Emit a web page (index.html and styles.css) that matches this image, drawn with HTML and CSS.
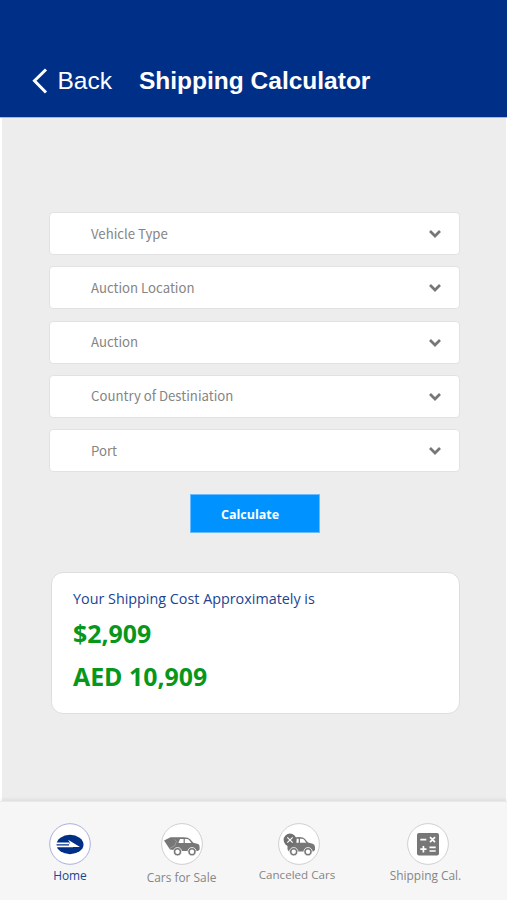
FILE: index.html
```html
<!DOCTYPE html>
<html lang="en">
<head>
<meta charset="utf-8">
<title>Shipping Calculator</title>
<link rel="stylesheet" href="styles.css">
</head>
<body>
<header class="header">
  <a class="back"><svg width="16" height="26" viewBox="0 0 16 26"><path d="M14 1.5 2.5 12.8 14 24.5" fill="none" stroke="#fff" stroke-width="3"/></svg><span>Back</span></a>
  <h1 class="title">Shipping Calculator</h1>
</header>
<main class="main">
  <form class="form">
    <div class="field"><span>Vehicle Type</span><svg class="chevron" viewBox="0 0 14 10"><path d="M2 2l5 5 5-5"/></svg></div>
    <div class="field"><span>Auction Location</span><svg class="chevron" viewBox="0 0 14 10"><path d="M2 2l5 5 5-5"/></svg></div>
    <div class="field"><span>Auction</span><svg class="chevron" viewBox="0 0 14 10"><path d="M2 2l5 5 5-5"/></svg></div>
    <div class="field"><span>Country of Destiniation</span><svg class="chevron" viewBox="0 0 14 10"><path d="M2 2l5 5 5-5"/></svg></div>
    <div class="field"><span>Port</span><svg class="chevron" viewBox="0 0 14 10"><path d="M2 2l5 5 5-5"/></svg></div>
  </form>
  <button class="calculate">Calculate</button>
  <section class="result">
    <p class="caption">Your Shipping Cost Approximately is</p>
    <p class="amount usd">$2,909</p>
    <p class="amount aed">AED 10,909</p>
  </section>
</main>
<nav class="nav">
  <a class="item home">
    <svg class="icon" viewBox="0 0 42 42"><circle cx="21" cy="21" r="20.3" fill="#fff" stroke="#a9b0dc"/><ellipse cx="21" cy="21.5" rx="13.5" ry="9.7" fill="#002f87"/><path d="M7 20.4h13.5M7 23.3h17" fill="none" stroke="#fff" stroke-width="1.7"/><path d="M19 16.8l12 7.3H20V21l1.2-.8z" fill="#fff"/></svg>
    <span>Home</span>
  </a>
  <a class="item sale">
    <svg class="icon" viewBox="0 0 42 42"><circle cx="21" cy="21" r="20.4" fill="#fff" stroke="#d0d0d0"/><path d="M3 17.5 9.5 14.2h11.5q6-.4 8.2 2.1l3.1 3.4 4.8 1.2q1.5.7 1.5 3v2.6l-1.7 1.5H19L9 26.6z" fill="#777"/><path d="M19 15.9h3.6v4.1h-5.2zm4.8 0h1.9q1.7 0 2.6 1.4l2.1 2.7h-6.6z" fill="#fff"/><path d="M9 25.2l4.5-2.3 2-4.5-1.8-2" fill="none" stroke="#b5b5b5" stroke-width=".6"/><g fill="#777" stroke="#fff" stroke-width=".8"><circle cx="16.5" cy="28.7" r="4.2"/><circle cx="31" cy="28.7" r="4.2"/></g><g fill="#fff"><circle cx="16.5" cy="28.7" r="2.2"/><circle cx="31" cy="28.7" r="2.2"/></g></svg>
    <span>Cars for Sale</span>
  </a>
  <a class="item canceled">
    <svg class="icon" viewBox="0 0 42 42"><circle cx="21" cy="21" r="20.4" fill="#fff" stroke="#d0d0d0"/><path d="M9.5 21l6.5-6q2-1 5-1 4.5 0 6 2l3 3.6 4.7 1.1q2.3.8 2.3 3.5v2.8l-1.7 1.5H11l-1.5-2z" fill="#777"/><path d="M18.4 15.7h2.3v4h-2.3zm3.6 0h1.8q1.6 0 2.5 1.3l2 2.7H22z" fill="#fff"/><g fill="#777" stroke="#fff" stroke-width=".8"><circle cx="15.7" cy="28.7" r="4.2"/><circle cx="30" cy="28.7" r="4.2"/></g><g fill="#fff"><circle cx="15.7" cy="28.7" r="2.2"/><circle cx="30" cy="28.7" r="2.2"/></g><circle cx="12" cy="17" r="6.4" fill="#707070"/><path d="M9.3 14.3l5.4 5.4m0-5.4-5.4 5.4" stroke="#fff" stroke-width="1.2"/></svg>
    <span>Canceled Cars</span>
  </a>
  <a class="item calc">
    <svg class="icon" viewBox="0 0 42 42"><circle cx="21" cy="21" r="20.4" fill="#fff" stroke="#d0d0d0"/><rect x="10" y="10" width="22" height="22.5" rx="2" fill="#777"/><path d="M13.3 16.7h6M23 14.2l5 5m0-5-5 5M13.3 26.2h6.2m-3.1-3.2v6.4M22.5 24.4h6.2m-6.2 3.6h6.2" fill="none" stroke="#fff" stroke-width="1.7"/></svg>
    <span>Shipping Cal.</span>
  </a>
</nav>
</body>
</html>
```

FILE: styles.css
```css
* { box-sizing: border-box; }
body {
  margin: 0;
  width: 507px;
  height: 900px;
  display: flex;
  flex-direction: column;
  overflow: hidden;
  background: #fff;
  font-family: "Open Sans", sans-serif;
}
h1, p { margin: 0; }
.header {
  height: 118px;
  padding: 61px 0 0 32px;
  display: flex;
  align-items: flex-start;
  background: #002f87;
  border-bottom: 1px solid #aab4de;
  color: #fff;
  font-family: "Liberation Sans", sans-serif;
  line-height: 38px;
}
.back { width: 107px; display: flex; gap: 9.5px; align-items: center; font-size: 24.5px; }
.back span, .title { padding-top: 1px; }
.back svg { margin-top: 1px; }
.title { font-size: 24.5px; font-weight: 700; white-space: nowrap; }
.main {
  height: 683px;
  margin: 0 1px 0 2px;
  padding: 94px 46px 0 47px;
  background: #ededed;
}
.form { display: flex; flex-direction: column; gap: 11.3px; }
.field {
  height: 43px;
  border: 1px solid #e2e2e2;
  border-radius: 4px;
  background: #fff;
  display: flex;
  align-items: center;
  justify-content: space-between;
  padding: 0 17px 0 41px;
  color: #858585;
  font: 13.2px/20px "Noto Sans CJK SC", sans-serif;
}
.chevron { width: 14px; height: 10px; margin-top: 1px; fill: none; stroke: #777; stroke-width: 2.7; }
.calculate {
  display: block;
  width: 130px;
  height: 39px;
  margin: 21.8px 0 0 141px;
  padding: 3px 10px 0 0;
  border: 1px solid #6bbcff;
  background: #0092ff;
  color: #fff;
  font: 700 12.5px/20px "Open Sans", sans-serif;
}
.result {
  height: 142px;
  margin: 39px 0 0 2px;
  padding: 14px 21px;
  border: 1px solid #dedede;
  border-radius: 12px;
  background: #fff;
}
.caption { font-size: 14.35px; line-height: 23px; color: #204493; white-space: nowrap; }
.amount { font-size: 24.9px; font-weight: 700; line-height: 42px; color: #08971b; white-space: nowrap; }
.usd { margin-top: 2px; }
.aed { padding-top: 1px; }
.nav {
  flex: 1;
  display: grid;
  grid-template-columns: 125px 99px 136px 121px;
  padding: 21px 0 0 7px;
  background: #f6f6f6;
  border-top: 1px solid #e9e9e9;
  box-shadow: 0 -2px 3px rgba(0, 0, 0, .06);
  color: #858585;
  font-size: 11.9px;
}
.item { display: flex; flex-direction: column; align-items: center; white-space: nowrap; line-height: 20px; }
.icon { width: 42px; height: 42px; }
.home { color: #204493; font-weight: 500; }
.home span { margin-left: 1px; }
.sale { gap: 2px; }
.canceled { font-size: 11.6px; }
.canceled span, .calc span { margin-right: 4px; }
```
